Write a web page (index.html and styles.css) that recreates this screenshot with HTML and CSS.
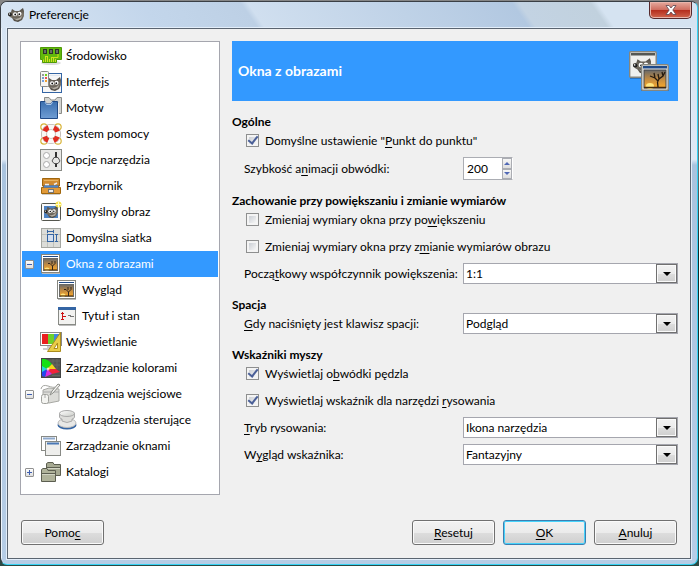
FILE: index.html
```html
<!DOCTYPE html>
<html lang="pl">
<head>
    <meta charset="UTF-8">
    <meta name="viewport" content="width=device-width, initial-scale=1.0">
    <title>Preferencje</title>
    <link rel="stylesheet" href="styles.css">
</head>
<body>
    <svg class="sprite" width="0" height="0" aria-hidden="true">
        <defs>
            <linearGradient id="sunset" x1="0" y1="0" x2="0" y2="1">
                <stop offset="0" stop-color="#68696a"/>
                <stop offset=".5" stop-color="#c08a42"/>
                <stop offset="1" stop-color="#fbab2c"/>
            </linearGradient>
            <linearGradient id="shirt" x1="0" y1="0" x2="0" y2="1">
                <stop offset="0" stop-color="#3b6fae"/>
                <stop offset="1" stop-color="#6f9dd4"/>
            </linearGradient>
            <linearGradient id="steel" x1="0" y1="0" x2="1" y2="1">
                <stop offset="0" stop-color="#fff"/>
                <stop offset="1" stop-color="#c9cbc6"/>
            </linearGradient>
            <linearGradient id="fur" x1="0" y1="0" x2="0" y2="1">
                <stop offset="0" stop-color="#4b463f"/>
                <stop offset=".5" stop-color="#7d776c"/>
                <stop offset="1" stop-color="#4b463f"/>
            </linearGradient>
        </defs>
        <symbol id="wilber" viewBox="0 0 16 14">
            <path d="M3 4 4 1 7 3 11 3 15 0 16 3 16 8 14 12 10 14 6 13 4 10 2 9 0 7 0 5Z" fill="url(#fur)"/>
            <path d="M5 10Q10 12 14 8L13 11 9 12.500Z" fill="#b3aea4"/>
            <ellipse cx="2" cy="6.500" rx="2" ry="1.800" fill="#222"/>
            <circle cx="1.500" cy="6" r=".7" fill="#eee"/>
            <circle cx="7" cy="6.200" r="2" fill="#fff"/>
            <circle cx="11.500" cy="5.800" r="2" fill="#fff"/>
            <circle cx="7.200" cy="6.500" r=".9" fill="#111"/>
            <circle cx="11.300" cy="6.200" r=".9" fill="#111"/>
        </symbol>
        <symbol id="photo" viewBox="0 0 28 27">
            <rect x=".7" y=".7" width="26.500" height="25.500" rx="1" fill="#f4f4f1" stroke="#85867f" stroke-width="1.400"/>
            <rect x="2" y="2" width="24" height="2.500" fill="#204a87"/>
            <rect x="3" y="6" width="22" height="18" fill="url(#sunset)" stroke="#45474a"/>
            <ellipse cx="9" cy="22" rx="4" ry="3" fill="#ffe680"/>
            <path d="M3 23.500H25" stroke="#432a10" stroke-width="1.500"/>
            <path d="M17 23 16.500 18 18 15 22 12 24 8M17 17 14 14 9 12M14 14 13 9M18 15 17 10M22 12 21 8" fill="none" stroke="#261b10" stroke-width="1.300"/>
        </symbol>
        <symbol id="photo-small" viewBox="0 0 22 22">
            <path d="M2 20.500H20" stroke="#bbb"/>
            <rect x="1.500" y="1.500" width="18" height="18" fill="#fff" stroke="#85867f"/>
            <path d="M3 3.500H18" stroke="#204a87"/>
            <rect x="3.500" y="5.500" width="14" height="12" fill="url(#sunset)" stroke="#6a6a66"/>
            <ellipse cx="7" cy="16" rx="2.500" ry="1.500" fill="#ffe680"/>
            <path d="M4 16.800H17" stroke="#6b430f"/>
            <path d="M12.500 17V13L15 10.500V8M12.500 13 10 10.500H8M12 11V8" fill="none" stroke="#33261a"/>
        </symbol>
        <symbol id="env" viewBox="0 0 22 22">
            <ellipse cx="11" cy="18" rx="10" ry="2" fill="#ddd"/>
            <path d="M.5 2.500H21.500V14.500H16.500V17.500H2.500V14.500H.5Z" fill="#62b80d" stroke="#4e9a06"/>
            <path d="M3 4H7V9H3ZM9 4H13V9H9ZM15 4H19V9H15Z" fill="#2b3329"/>
            <path d="M5 5V8M11 5V8M17 5V8" stroke="#a3ad9c"/>
            <path d="M3.500 17V14.500M5.500 17V12M7.500 17V12M9.500 17V14M11.500 17V12M13.500 17V13M15.500 17V14M5 11.500H8M12 12.500H18V9" fill="none" stroke="#cfe01e"/>
        </symbol>
        <symbol id="iface" viewBox="0 0 22 22">
            <rect x="2.500" y="2.500" width="19" height="19" fill="#f6f6f6" stroke="#3465a4"/>
            <path d="M4 4.500H20" stroke="#dfe6ef"/>
            <use href="#wilber" x="5" y="6" width="16" height="14"/>
            <rect x=".5" y=".5" width="8" height="15" rx="1" fill="#f5f5f3" stroke="#8a8b87"/>
            <path d="M2 3H4V5H2Z" fill="#999"/><path d="M5 3H7V5H5Z" fill="#73d216"/>
            <path d="M2 6H4V8H2Z" fill="#729fcf"/><path d="M5 6H7V8H5Z" fill="#ef5050"/>
            <path d="M2 9H4V11H2Z" fill="#73a0e0"/><path d="M5 9H7V11H5Z" fill="#f0a030"/>
        </symbol>
        <symbol id="theme" viewBox="0 0 22 22">
            <path d="M4.500.5H9L11 3H15L17 .5H21.500V16.500H4.500Z" fill="#d3d4d1" stroke="#8b8c88"/>
            <path d="M.5 4.500H5L6.500 7H11L12.500 4.500H17.500V21.500H.5Z" fill="url(#shirt)" stroke="#204a87"/>
            <path d="M5 5 6.500 7.500H11L12.500 5" fill="none" stroke="#a9c8ee"/>
            <path d="M18.500 6V17" stroke="#eee"/>
        </symbol>
        <symbol id="help" viewBox="0 0 22 22">
            <g fill="none" stroke="#d8b43a" stroke-width="1.200">
                <circle cx="4" cy="4" r="3.200"/><circle cx="18" cy="4" r="3.200"/>
                <circle cx="4" cy="18" r="3.200"/><circle cx="18" cy="18" r="3.200"/>
            </g>
            <circle cx="11" cy="11" r="7" fill="#fff" stroke="#a79a95" stroke-width="6"/>
            <circle cx="11" cy="11" r="7" fill="none" stroke="#f8f7f5" stroke-width="4.800"/>
            <circle cx="11" cy="11" r="7" fill="none" stroke="#e02b20" stroke-width="4.800" stroke-dasharray="5.500 5.500" stroke-dashoffset="-2.750"/>
        </symbol>
        <symbol id="options" viewBox="0 0 22 22">
            <rect x=".5" y=".5" width="21" height="21" fill="#e9e9e7" stroke="#888a85"/>
            <circle cx="6.500" cy="6.500" r="3" fill="#fff" stroke="#aaa"/>
            <circle cx="6.500" cy="15.500" r="3" fill="#fff" stroke="#aaa"/>
            <path d="M16 3V18" stroke="#333" stroke-width="2"/>
            <path d="M14 8.500H18L20 12 18 14.500H14L12 12Z" fill="#e6e6e4" stroke="#555"/>
        </symbol>
        <symbol id="toolbox" viewBox="0 0 22 22">
            <path d="M2 19.500H20" stroke="#ccc"/>
            <path d="M2.500 3.500H19.500V11H2.500Z" fill="#d08a30" stroke="#a0660c"/>
            <path d="M4 5.500H18" stroke="#e9b45f"/>
            <path d="M1.500 12.500H20.500V18.500H1.500Z" fill="#e29a38" stroke="#a0660c"/>
            <path d="M3 10H19V13H3Z" fill="#8f6a3a"/>
            <path d="M4 11.500H18" stroke="#4a86cf" stroke-width="2"/>
            <path d="M5 9.500H9M14 9.500 17 8" stroke="#eee" stroke-width="1.500"/>
            <rect x="8.500" y="14.500" width="5" height="3" fill="#eee" stroke="#777"/>
        </symbol>
        <symbol id="newimage" viewBox="0 0 22 22">
            <rect x="1.500" y="2.500" width="19" height="17" rx="1" fill="#fafafa" stroke="#55574f"/>
            <rect x="4" y="5" width="14" height="12" fill="#4d82c2"/>
            <use href="#wilber" x="4" y="5" width="14" height="12"/>
            <circle cx="18.500" cy="3.500" r="3" fill="#f6e24a"/>
            <path d="M18.500 1V6M16 3.500H21" stroke="#fffbd0"/>
        </symbol>
        <symbol id="grid" viewBox="0 0 22 22">
            <rect x="1.500" y="1.500" width="19" height="19" fill="#dcddd9" stroke="#a5a7a2"/>
            <path d="M7.500 2V20M13.500 2V20M2 7.500H20M2 14.500H20" stroke="#c0c2bc"/>
            <rect x="7.500" y="7.500" width="6" height="7" fill="#d3dff0" stroke="#3465a4"/>
            <path d="M7 4.500H14M16.500 7V15M7.500 3V6M13.500 3V6M15 7.500H18M15 14.500H18" stroke="#3465a4"/>
        </symbol>
        <symbol id="titles" viewBox="0 0 22 22">
            <path d="M3 20.500H20" stroke="#bbb"/>
            <rect x="2.500" y="2.500" width="17" height="17" fill="#f2f2f0" stroke="#888a85"/>
            <path d="M2 2H20V5H2Z" fill="#3465a4"/>
            <path d="M6.500 7V15M5 8.500H8M7 11.500H10M5 14.500H8" stroke="#c11"/>
            <path d="M12 10.500H15M14 11.500H18" stroke="#777"/>
        </symbol>
        <symbol id="display" viewBox="0 0 22 22">
            <rect x=".5" y="1.500" width="21" height="13" fill="#fff" stroke="#888"/>
            <path d="M2 3H8V13H2Z" fill="#ea2020"/><path d="M8 3H14V13H8Z" fill="#6cd02c"/><path d="M14 3H20V13H14Z" fill="#3f86de"/>
            <path d="M7 15H12V17H7ZM3 17H14V19H3Z" fill="#ccc"/>
            <path d="M20.500 1.500V20.500H7.500Z" fill="#e9cd48" stroke="#ab8c1c"/>
            <path d="M17.500 12V17.500H14Z" fill="#fff" stroke="#ab8c1c"/>
        </symbol>
        <symbol id="colors" viewBox="0 0 22 22">
            <rect x="1.500" y="1.500" width="19" height="19" fill="#555753" stroke="#444"/>
            <path d="M13 2V9M17 2V12M9 4H20M14 8H20M12 18.500H20" stroke="#666864"/>
            <path d="M2 2H5Q9 3 12 7L7 12 2 10Z" fill="#14e014"/>
            <path d="M12 7 16 12 9 13 7 12Z" fill="#f4d51c"/>
            <path d="M16 12 20 15 12 17 7 12Z" fill="#f3233a"/>
            <path d="M7 12 12 17 5 20Z" fill="#d92be0"/>
            <path d="M2 14 7 12 5 20 2 19Z" fill="#2446ef"/>
            <path d="M2 9 7 12 2 15Z" fill="#25d7dc"/>
            <circle cx="8" cy="12" r="1.500" fill="#fff" opacity=".7"/>
        </symbol>
        <symbol id="input" viewBox="0 0 22 22">
            <path d="M3 7 9 5 19 6V18L9 20 3 19Z" fill="#dcdcd8" stroke="#a8a9a4"/>
            <path d="M3 9H19" stroke="#aaa"/>
            <path d="M1 6Q2 1 8 3T15 4" fill="none" stroke="#a5a6a1"/>
            <rect x="1.500" y="11.500" width="7" height="9" rx="2" fill="#f4f4f1" stroke="#a0a19c"/>
            <path d="M5 12V15" stroke="#aaa"/>
            <path d="M20 2 13 10 10 12 12 8 18 1Z" fill="#f5f5f2" stroke="#8d8e89"/>
        </symbol>
        <symbol id="knob" viewBox="0 0 22 22">
            <ellipse cx="11" cy="16" rx="9.500" ry="4.500" fill="#3465a4"/>
            <ellipse cx="11" cy="14" rx="9" ry="4.500" fill="#e8e8e6" stroke="#bbb"/>
            <path d="M3.500 4V8Q4 10 6 10V12Q11 15 16 12V10Q18 10 18.500 8V4Z" fill="#dededb" stroke="#aaa"/>
            <ellipse cx="11" cy="4.500" rx="7.500" ry="3" fill="url(#steel)" stroke="#aaa"/>
        </symbol>
        <symbol id="windows" viewBox="0 0 22 22">
            <rect x="1.500" y="1.500" width="15" height="14" fill="#fff" stroke="#888a85"/>
            <path d="M3 3.500H15" stroke="#8fa9cc" stroke-width="2"/>
            <rect x="5.500" y="6.500" width="15" height="14" fill="#eeeeec" stroke="#888a85"/>
            <path d="M7 8.500H19" stroke="#4a78b5" stroke-width="2"/>
        </symbol>
        <symbol id="folders" viewBox="0 0 22 22">
            <path d="M6.500 14.500V2.500L8 1.500H13L14 3.500H20.500V14.500Z" fill="#a6a992" stroke="#5c5e50"/>
            <path d="M7 6.500H20" stroke="#5c5e50"/><path d="M7 7.500H20" stroke="#d2d4c4"/>
            <path d="M1.500 20.500V8.500L3 7.500H7L8 9.500H15.500V20.500Z" fill="#b0b39b" stroke="#5c5e50"/>
            <path d="M2 12.500H15" stroke="#5c5e50"/><path d="M2 13.500H15" stroke="#d2d4c4"/>
        </symbol>
    </svg>

    <div class="window">
        <header class="titlebar">
            <svg class="app-icon"><use href="#wilber"/></svg>
            <h1>Preferencje</h1>
            <button type="button" class="close-btn" aria-label="Zamknij">
                <svg width="12" height="10" viewBox="0 0 12 10">
                    <path d="M1 .5H4L6 3 8 .5H11L7.800 5 11 9.500H8L6 7 4 9.500H1L4.200 5Z" fill="#fff" stroke="#5b4650" stroke-width=".8"/>
                </svg>
            </button>
        </header>

        <form class="client">
            <div class="content">
                <nav class="tree">
                    <ul>
                        <li><a href="#"><svg><use href="#env"/></svg>Środowisko</a></li>
                        <li><a href="#"><svg><use href="#iface"/></svg>Interfejs</a></li>
                        <li><a href="#"><svg><use href="#theme"/></svg>Motyw</a></li>
                        <li><a href="#"><svg><use href="#help"/></svg>System pomocy</a></li>
                        <li><a href="#"><svg><use href="#options"/></svg>Opcje narzędzia</a></li>
                        <li><a href="#"><svg><use href="#toolbox"/></svg>Przybornik</a></li>
                        <li><a href="#"><svg><use href="#newimage"/></svg>Domyślny obraz</a></li>
                        <li><a href="#"><svg><use href="#grid"/></svg>Domyślna siatka</a></li>
                        <li class="selected"><button type="button" class="expander" aria-label="Zwiń"></button><a href="#"><svg><use href="#photo-small"/></svg>Okna z obrazami</a></li>
                        <li class="child"><a href="#"><svg><use href="#photo-small"/></svg>Wygląd</a></li>
                        <li class="child"><a href="#"><svg><use href="#titles"/></svg>Tytuł i stan</a></li>
                        <li><a href="#"><svg><use href="#display"/></svg>Wyświetlanie</a></li>
                        <li><a href="#"><svg><use href="#colors"/></svg>Zarządzanie kolorami</a></li>
                        <li><button type="button" class="expander" aria-label="Zwiń"></button><a href="#"><svg><use href="#input"/></svg>Urządzenia wejściowe</a></li>
                        <li class="child"><a href="#"><svg><use href="#knob"/></svg>Urządzenia sterujące</a></li>
                        <li><a href="#"><svg><use href="#windows"/></svg>Zarządzanie oknami</a></li>
                        <li><button type="button" class="expander closed" aria-label="Rozwiń"></button><a href="#"><svg><use href="#folders"/></svg>Katalogi</a></li>
                    </ul>
                </nav>

                <main class="page">
                    <div class="banner">
                        <h2>Okna z obrazami</h2>
                        <svg width="40" height="40" viewBox="0 0 40 40">
                            <path d="M1 27H28M12 39.500H40" stroke="#2973c3" stroke-width="2"/>
                            <rect x=".7" y=".7" width="26.500" height="25.500" rx="1" fill="#f0f0ee" stroke="#85867f" stroke-width="1.400"/>
                            <rect x="2" y="2" width="24" height="2.500" fill="#555753"/>
                            <use href="#wilber" x="4" y="7" width="18" height="16"/>
                            <use href="#photo" x="12" y="13" width="28" height="27"/>
                        </svg>
                    </div>

                    <section>
                        <h3>Ogólne</h3>
                        <div class="rows">
                            <label class="check"><input type="checkbox" checked><span>Domyślne ustawienie "<u>P</u>unkt do punktu"</span></label>
                            <div class="field">
                                <label for="speed">Szybkość a<u>n</u>imacji obwódki:</label>
                                <div class="spin">
                                    <input type="number" id="speed" value="200">
                                    <div class="spin-btns">
                                        <button type="button" class="up" aria-label="Więcej" onclick="speed.stepUp()"></button>
                                        <button type="button" class="down" aria-label="Mniej" onclick="speed.stepDown()"></button>
                                    </div>
                                </div>
                            </div>
                        </div>
                    </section>

                    <section>
                        <h3>Zachowanie przy powiększaniu i zmianie wymiarów</h3>
                        <div class="rows">
                            <label class="check"><input type="checkbox"><span>Zmieniaj wymiary okna przy po<u>w</u>iększeniu</span></label>
                            <label class="check"><input type="checkbox"><span>Zmieniaj wymiary okna przy z<u>m</u>ianie wymiarów obrazu</span></label>
                            <div class="field">
                                <label for="zoom">Począ<u>t</u>kowy współczynnik powiększenia:</label>
                                <div class="combo"><select id="zoom"><option>1:1</option></select></div>
                            </div>
                        </div>
                    </section>

                    <section>
                        <h3>Spacja</h3>
                        <div class="rows">
                            <div class="field">
                                <label for="space"><u>G</u>dy naciśnięty jest klawisz spacji:</label>
                                <div class="combo"><select id="space"><option>Podgląd</option></select></div>
                            </div>
                        </div>
                    </section>

                    <section>
                        <h3>Wskaźniki myszy</h3>
                        <div class="rows">
                            <label class="check"><input type="checkbox" checked><span>Wyświetlaj o<u>b</u>wódki pędzla</span></label>
                            <label class="check"><input type="checkbox" checked><span>Wyświetlaj wskaźnik dla narzędzi <u>r</u>ysowania</span></label>
                            <div class="field">
                                <label for="mode"><u>T</u>ryb rysowania:</label>
                                <div class="combo"><select id="mode"><option>Ikona narzędzia</option></select></div>
                            </div>
                            <div class="field">
                                <label for="look">W<u>y</u>gląd wskaźnika:</label>
                                <div class="combo"><select id="look"><option>Fantazyjny</option></select></div>
                            </div>
                        </div>
                    </section>
                </main>
            </div>

            <footer class="actions">
                <button type="button" class="btn help-btn">Pomo<u>c</u></button>
                <button type="reset" class="btn"><u>R</u>esetuj</button>
                <button type="button" class="btn default"><u>O</u>K</button>
                <button type="button" class="btn"><u>A</u>nuluj</button>
            </footer>
        </form>
    </div>
</body>
</html>
```
FILE: styles.css
```css
* {
    box-sizing: border-box;
}
body {
    margin: 0;
    min-height: 100vh;
    display: flex;
    padding-top: 1px;
    background: linear-gradient(to bottom, #868686, #6a6d6d 30%, #0d2a2c 45%, #2b4a44);
    font-family: Lato, "Open Sans", sans-serif;
    font-size: 12px;
    line-height: 16px;
    color: #000;
}
h1, h2, h3, ul {
    margin: 0;
    padding: 0;
}
button, input, select {
    font: inherit;
    color: inherit;
    margin: 0;
    padding: 0;
}
u {
    text-underline-offset: 2px;
    text-decoration-thickness: 1px;
    text-decoration-skip-ink: none;
}
.sprite {
    position: absolute;
}

/* window frame */
.window {
    flex: 1;
    display: flex;
    flex-direction: column;
    margin-right: 1px;
    margin-bottom: 1px;
    padding: 0 6px 5px 6px;
    border: 1px solid #3a3f45;
    border-right-color: #35d3f5;
    border-bottom-color: #35d3f5;
    border-radius: 7px;
    background: linear-gradient(to bottom, #d3e2f2, #dfe9f5 28%, #a9c3de 29%, #b6cde6);
    box-shadow: inset 1px 1px 0 #eef5fc;
}
.titlebar {
    display: flex;
    align-items: center;
    height: 26px;
    margin: 0 -6px;
    padding-left: 7px;
    border-radius: 6px 6px 0 0;
    background: linear-gradient(55deg, #d9e6f4 0, #c3d6eb 22%, #bdd0e5 36%, #d0dfef 37%, #b2c8e1 74%, #c3d3e3 75%, #c1d1de 85%, #d5e3f1 86%);
}
.app-icon {
    width: 16px;
    height: 14px;
    margin-right: 5px;
}
.titlebar h1 {
    flex: 1;
    font-size: 12px;
    font-weight: normal;
}
.close-btn {
    align-self: flex-start;
    display: flex;
    align-items: center;
    justify-content: center;
    width: 43px;
    height: 17px;
    margin-right: 5px;
    border: 1px solid #56292c;
    border-top: none;
    border-radius: 0 0 5px 5px;
    background: linear-gradient(to bottom, #e5aa9e, #cf6e60 48%, #b42c1c 50%, #d0664e);
    box-shadow: inset 0 0 0 1px #e8b5ab;
}

/* dialog body */
.client {
    flex: 1;
    display: flex;
    flex-direction: column;
    gap: 25px;
    padding: 12px 12px 13px;
    border: 1px solid #5a6470;
    background: #f0f0f0;
    box-shadow: 0 0 0 1px #e3eefa;
}
.content {
    flex: 1;
    display: flex;
    gap: 12px;
}
.tree {
    flex: 0 0 200px;
    padding: 1px;
    border: 1px solid #a5a6ae;
    background: #fff;
}
.tree li {
    display: flex;
    align-items: center;
    height: 26px;
    padding-left: 18px;
}
.tree li.child {
    padding-left: 34px;
}
.tree li:has(.expander) {
    padding-left: 3px;
    gap: 6px;
}
.tree a {
    display: flex;
    align-items: center;
    gap: 4px;
    color: #000;
    text-decoration: none;
    white-space: nowrap;
}
.tree svg {
    width: 22px;
    height: 22px;
}
.tree .selected {
    background: #3399ff;
}
.tree .selected a {
    color: #fff;
}
.expander {
    width: 9px;
    height: 9px;
    border: 1px solid #919191;
    border-radius: 1px;
    background: linear-gradient(#3f5fb0, #3f5fb0) center / 5px 1px no-repeat, linear-gradient(#fff, #ddd);
}
.expander.closed {
    background: linear-gradient(#3f5fb0, #3f5fb0) center / 5px 1px no-repeat,
        linear-gradient(#3f5fb0, #3f5fb0) center / 1px 5px no-repeat,
        linear-gradient(#fff, #ddd);
}

.page {
    flex: 1;
    display: flex;
    flex-direction: column;
    gap: 12px;
    min-width: 0;
}
.banner {
    display: flex;
    align-items: center;
    justify-content: space-between;
    height: 60px;
    padding: 0 9px 0 6px;
    background: #3399ff;
    color: #fff;
}
.banner h2 {
    font-size: 14px;
}
.page h3 {
    font-size: 12px;
    line-height: 17px;
}
.rows {
    display: flex;
    flex-direction: column;
    gap: 6px;
    padding-left: 12px;
}
.check {
    display: flex;
    align-items: center;
    gap: 6px;
    height: 21px;
    padding-left: 2px;
}
.check input {
    appearance: none;
    width: 13px;
    height: 13px;
    border: 1px solid #8e8f8f;
    background: linear-gradient(135deg, #cbcfd5, #f6f6f6) content-box, #f4f4f4;
    padding: 2px;
    display: grid;
    place-items: center;
}
.check input:checked::after {
    content: "";
    width: 4px;
    height: 8px;
    margin-top: -3px;
    border: solid #4a5f97;
    border-width: 0 2px 2px 0;
    transform: rotate(38deg);
}
.field {
    display: grid;
    grid-template-columns: 219px 1fr;
    align-items: center;
}
.field label {
    white-space: nowrap;
}

.spin {
    display: flex;
    width: 50px;
    height: 23px;
    border: 1px solid #abadb3;
    border-right-color: #fff;
    background: #fff;
}
.spin input {
    flex: 1;
    width: 0;
    padding-left: 3px;
    border: none;
    background: none;
    outline: none;
    appearance: textfield;
}
.spin input::-webkit-inner-spin-button {
    appearance: none;
}
.spin-btns {
    display: flex;
    flex-direction: column;
    width: 10px;
}
.spin-btns button {
    flex: 1;
    display: flex;
    align-items: center;
    justify-content: center;
    border: 1px solid #abadb3;
    background: linear-gradient(#f6f6f6, #dedede);
}
.spin-btns button::after {
    content: "";
    border: 3px solid transparent;
    border-top-width: 0;
    border-bottom-color: #5068b5;
}
.spin-btns .down::after {
    transform: rotate(180deg);
}

.combo {
    position: relative;
}
.combo select {
    appearance: none;
    display: block;
    width: 100%;
    height: 21px;
    padding-left: 2px;
    border: 1px solid #a5a6ae;
    border-radius: 0;
    background: #fff;
}
/* drop-down button over the right end of the select */
.combo::before {
    content: "";
    position: absolute;
    top: 1px;
    right: 1px;
    bottom: 1px;
    width: 19px;
    border: 1px solid #707070;
    background: linear-gradient(#f2f2f2, #ebebeb 50%, #dddddd 51%, #cfcfcf);
    box-shadow: inset 0 0 0 1px #fafafa;
    pointer-events: none;
}
.combo::after {
    content: "";
    position: absolute;
    top: 9px;
    right: 7px;
    border: 4px solid transparent;
    border-bottom-width: 0;
    border-top-color: #000;
    pointer-events: none;
}

.actions {
    display: flex;
    gap: 8px;
    padding: 0 1px;
}
.btn {
    width: 83px;
    height: 25px;
    border: 1px solid #707070;
    border-radius: 3px;
    background: linear-gradient(#f2f2f2, #ebebeb 50%, #dddddd 51%, #cfcfcf);
    box-shadow: inset 0 0 0 1px #fafafa;
}
.btn.default {
    border-color: #3c7fb1;
    box-shadow: inset 0 0 0 1px #46d3fb;
}
.help-btn {
    margin-right: auto;
}
```
